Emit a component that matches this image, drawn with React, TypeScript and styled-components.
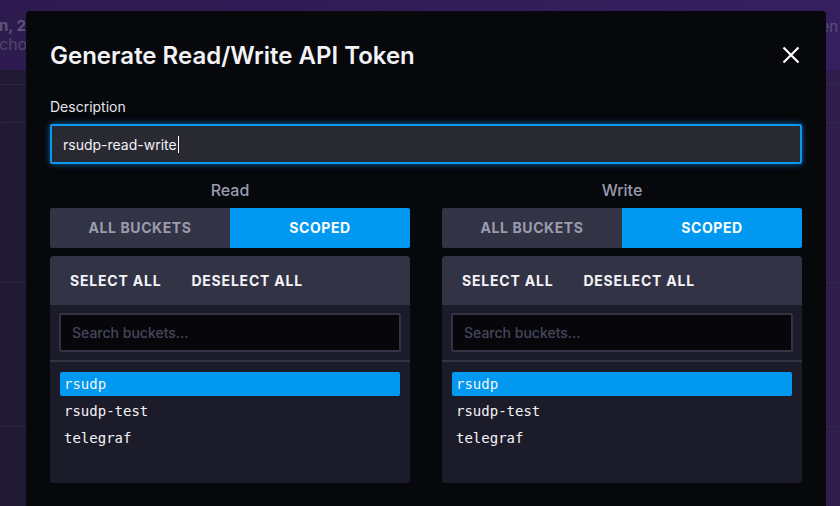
import styled, { createGlobalStyle } from 'styled-components';

const GlobalStyle = createGlobalStyle`
  html, body {
    margin: 0;
    padding: 0;
    background: #1f1931;
    overflow: hidden;
  }
  * {
    box-sizing: border-box;
  }
`;

const buckets = ['rsudp', 'rsudp-test', 'telegraf'];

function BucketPanel({ title }: { title: string }) {
  return (
    <Column>
      <ColumnTitle>{title}</ColumnTitle>
      <Toggle>
        <ToggleOption>All Buckets</ToggleOption>
        <ToggleOption active>Scoped</ToggleOption>
      </Toggle>
      <BucketBox>
        <BoxHeader>
          <TextButton>Select All</TextButton>
          <TextButton>Deselect All</TextButton>
        </BoxHeader>
        <SearchWrap>
          <SearchInput placeholder="Search buckets..." readOnly />
        </SearchWrap>
        <BucketList>
          {buckets.map((b, i) => (
            <BucketItem key={b} selected={i === 0}>
              {b}
            </BucketItem>
          ))}
        </BucketList>
      </BucketBox>
    </Column>
  );
}

export default function App() {
  return (
    <Page>
      <GlobalStyle />
      <Backdrop>
        <BackdropHeader>
          <BackdropMeta>
            <strong>n, 2021</strong>
            <span>chosen</span>
          </BackdropMeta>
          <BackdropRight>Token</BackdropRight>
        </BackdropHeader>
        <BackdropRow h={15} />
        <BackdropRow h={38} />
        <BackdropRow h={160} />
        <BackdropRow h={144} />
      </Backdrop>

      <Modal>
        <Header>
          <Title>Generate Read/Write API Token</Title>
          <CloseButton aria-label="close">
            <svg width="18" height="18" viewBox="0 0 18 18">
              <path d="M1.5 1.5 L16.5 16.5 M16.5 1.5 L1.5 16.5" stroke="#fff" strokeWidth="2.2" />
            </svg>
          </CloseButton>
        </Header>

        <Label>Description</Label>
        <DescriptionInput>
          rsudp-read-write<Caret />
        </DescriptionInput>

        <Columns>
          <BucketPanel title="Read" />
          <BucketPanel title="Write" />
        </Columns>
      </Modal>
    </Page>
  );
}

const Page = styled.div`
  position: relative;
  width: 840px;
  height: 506px;
  overflow: hidden;
  font-family: Inter, Roboto, 'Liberation Sans', sans-serif;
`;

const Backdrop = styled.div`
  width: 100%;
  height: 100%;
  display: flex;
  flex-direction: column;
  background: linear-gradient(90deg, #1f1a31 0%, #281c41 60%, #2f1d4b 100%);
`;

const BackdropHeader = styled.div`
  height: 70px;
  display: flex;
  justify-content: space-between;
  align-items: flex-start;
  padding-top: 17px;
  background: linear-gradient(90deg, #2d1b50 0%, #361f5f 100%);
`;

const BackdropMeta = styled.div`
  display: flex;
  flex-direction: column;
  margin-left: -1px;
  font-size: 15px;
  line-height: 18px;
  color: #5d5478;
  strong {
    font-weight: 700;
  }
  span {
    color: #4f4868;
    font-size: 16px;
  }
`;

const BackdropRight = styled.div`
  margin-right: 2px;
  font-size: 15px;
  color: #5a4f78;
`;

const BackdropRow = styled.div<{ h: number }>`
  height: ${(p) => p.h}px;
  border-bottom: 1px solid rgba(60, 50, 85, 0.45);
`;

const Modal = styled.div`
  position: absolute;
  left: 26px;
  top: 11px;
  width: 800px;
  height: 530px;
  background: #07080c;
  border-radius: 4px;
  padding: 0 24px;
  display: flex;
  flex-direction: column;
`;

const Header = styled.div`
  height: 30px;
  margin-top: 29px;
  display: flex;
  align-items: center;
  justify-content: space-between;
`;

const Title = styled.h2`
  margin: 0;
  font-size: 24px;
  font-weight: 600;
  color: #f3f3f6;
`;

const CloseButton = styled.button`
  width: 30px;
  height: 30px;
  margin-right: -4px;
  padding: 0;
  border: 0;
  background: transparent;
  display: flex;
  align-items: center;
  justify-content: center;
`;

const Label = styled.div`
  margin-top: 28px;
  font-size: 14px;
  line-height: 18px;
  color: #e4e5ea;
`;

const DescriptionInput = styled.div`
  margin-top: 8px;
  height: 40px;
  border: 2px solid #0b98f0;
  border-radius: 2px;
  background: #292932;
  box-shadow: 0 0 6px rgba(0, 152, 240, 0.65);
  display: flex;
  align-items: center;
  padding-left: 11px;
  font-size: 14px;
  color: #f2f2f5;
`;

const Caret = styled.span`
  display: inline-block;
  width: 1px;
  height: 17px;
  margin-left: 1px;
  background: #ffffff;
`;

const Columns = styled.div`
  margin-top: 16px;
  display: grid;
  grid-template-columns: 360px 360px;
  column-gap: 32px;
`;

const Column = styled.div`
  display: flex;
  flex-direction: column;
`;

const ColumnTitle = styled.div`
  height: 20px;
  line-height: 20px;
  text-align: center;
  font-size: 16px;
  font-weight: 500;
  color: #999caf;
`;

const Toggle = styled.div`
  margin-top: 8px;
  height: 40px;
  display: grid;
  grid-template-columns: 1fr 1fr;
  border-radius: 2px;
  overflow: hidden;
`;

const ToggleOption = styled.div<{ active?: boolean }>`
  display: flex;
  align-items: center;
  justify-content: center;
  padding-bottom: 1px;
  text-transform: uppercase;
  font-size: 14px;
  font-weight: 700;
  letter-spacing: 0.6px;
  background: ${(p) => (p.active ? '#0098f0' : '#333346')};
  color: ${(p) => (p.active ? '#ffffff' : '#9b9dae')};
`;

const BucketBox = styled.div`
  margin-top: 8px;
  height: 227px;
  border-radius: 4px;
  overflow: hidden;
  background: #1c1b29;
  display: flex;
  flex-direction: column;
`;

const BoxHeader = styled.div`
  height: 49px;
  flex-shrink: 0;
  background: #333346;
  display: flex;
  align-items: center;
  gap: 30px;
  padding-left: 20px;
`;

const TextButton = styled.span`
  text-transform: uppercase;
  font-size: 14px;
  font-weight: 700;
  letter-spacing: 0.8px;
  color: #f4f4f8;
`;

const SearchWrap = styled.div`
  padding: 8px 9px;
  border-bottom: 2px solid #333346;
`;

const SearchInput = styled.input`
  width: 100%;
  height: 39px;
  border: 2px solid #333346;
  border-radius: 2px;
  background: #07070b;
  padding: 0 11px;
  font-family: Inter, Roboto, 'Liberation Sans', sans-serif;
  font-size: 14px;
  font-weight: 500;
  color: #fff;
  outline: none;
  &::placeholder {
    color: #45465a;
  }
`;

const BucketList = styled.div`
  padding: 10px;
  display: flex;
  flex-direction: column;
  gap: 3px;
`;

const BucketItem = styled.div<{ selected?: boolean }>`
  height: 24px;
  line-height: 24px;
  padding-left: 4px;
  border-radius: 2px;
  font-family: 'DejaVu Sans Mono', 'Liberation Mono', monospace;
  font-size: 14px;
  color: #f4f4f8;
  background: ${(p) => (p.selected ? '#0098f0' : 'transparent')};
`;
